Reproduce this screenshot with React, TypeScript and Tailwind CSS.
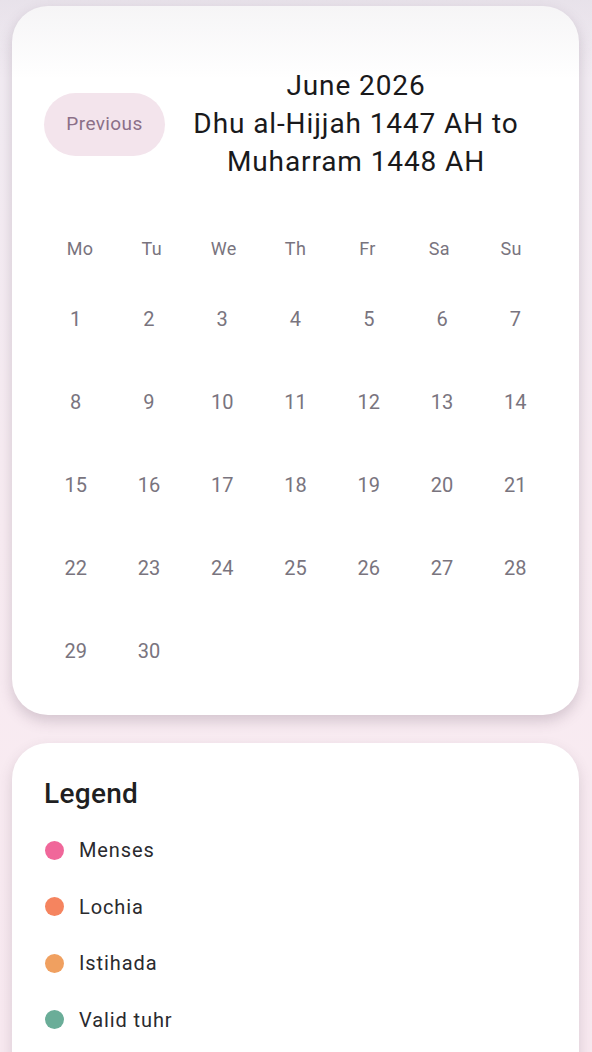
import React from "react";

const weekdays = ["Mo", "Tu", "We", "Th", "Fr", "Sa", "Su"];
const days: (number | null)[] = Array.from({ length: 30 }, (_, i) => i + 1);

const legend = [
  { label: "Menses", color: "bg-[#f0679a]" },
  { label: "Lochia", color: "bg-[#f5845f]" },
  { label: "Istihada", color: "bg-[#f0a060]" },
  { label: "Valid tuhr", color: "bg-[#6aad98]" },
];

export default function App() {
  return (
    <div
      className="relative w-[592px] h-[1052px] overflow-hidden bg-gradient-to-b from-[#f1ecf3] via-[#f8ecf2] to-[#f8e9f0] px-[12px] pt-[6px]"
      style={{ fontFamily: "Roboto, 'Noto Sans', sans-serif" }}
    >
      <div className="pointer-events-none absolute inset-x-0 top-0 h-[80px] bg-gradient-to-b from-[rgba(60,40,70,0.05)] to-transparent z-10" />
      <div className="w-[567px] rounded-[36px] bg-white shadow-[0_6px_14px_rgba(80,60,80,0.22)] px-[32px] pt-[61px] pb-[28px]">
        <div className="flex items-center">
          <button className="h-[63px] w-[121px] shrink-0 rounded-full bg-[#f3e4ec] text-[19px] tracking-[0.4px] text-[#8b6f88]">
            Previous
          </button>
          <div className="flex-1 text-center text-[28px] leading-[38px] text-[#19191b] font-normal tracking-[0.9px]">
            <div>June 2026</div>
            <div>Dhu al-Hijjah 1447 AH to</div>
            <div>Muharram 1448 AH</div>
          </div>
        </div>
        <div className="mt-[55px] grid grid-cols-7">
          {weekdays.map((d) => (
            <div key={d} className="h-[24px] flex items-center justify-center text-[18px] tracking-[0.3px] text-[#79747e]">
              {d}
            </div>
          ))}
        </div>
        <div className="mt-[22px] grid grid-cols-7 gap-x-[10px] gap-y-[10px]">
          {days.map((d, i) => (
            <div key={i} className="h-[73px] flex items-center justify-center text-[20px] text-[#79747e]">
              {d}
            </div>
          ))}
        </div>
      </div>
      <div className="mt-[28px] w-[567px] h-[400px] rounded-[36px] bg-white shadow-[0_6px_14px_rgba(80,60,80,0.18)] px-[32px] pt-[34px]">
        <div className="text-[28px] leading-[34px] font-medium tracking-[0.3px] text-[#1f1f22]">Legend</div>
        <div className="mt-[11px] flex flex-col">
          {legend.map((l) => (
            <div key={l.label} className="h-[56.5px] flex items-center">
              <span className={`ml-[1px] h-[19px] w-[19px] rounded-full ${l.color}`} />
              <span className="ml-[15px] text-[20px] tracking-[0.9px] text-[#2a2a2e]">{l.label}</span>
            </div>
          ))}
        </div>
      </div>
    </div>
  );
}
